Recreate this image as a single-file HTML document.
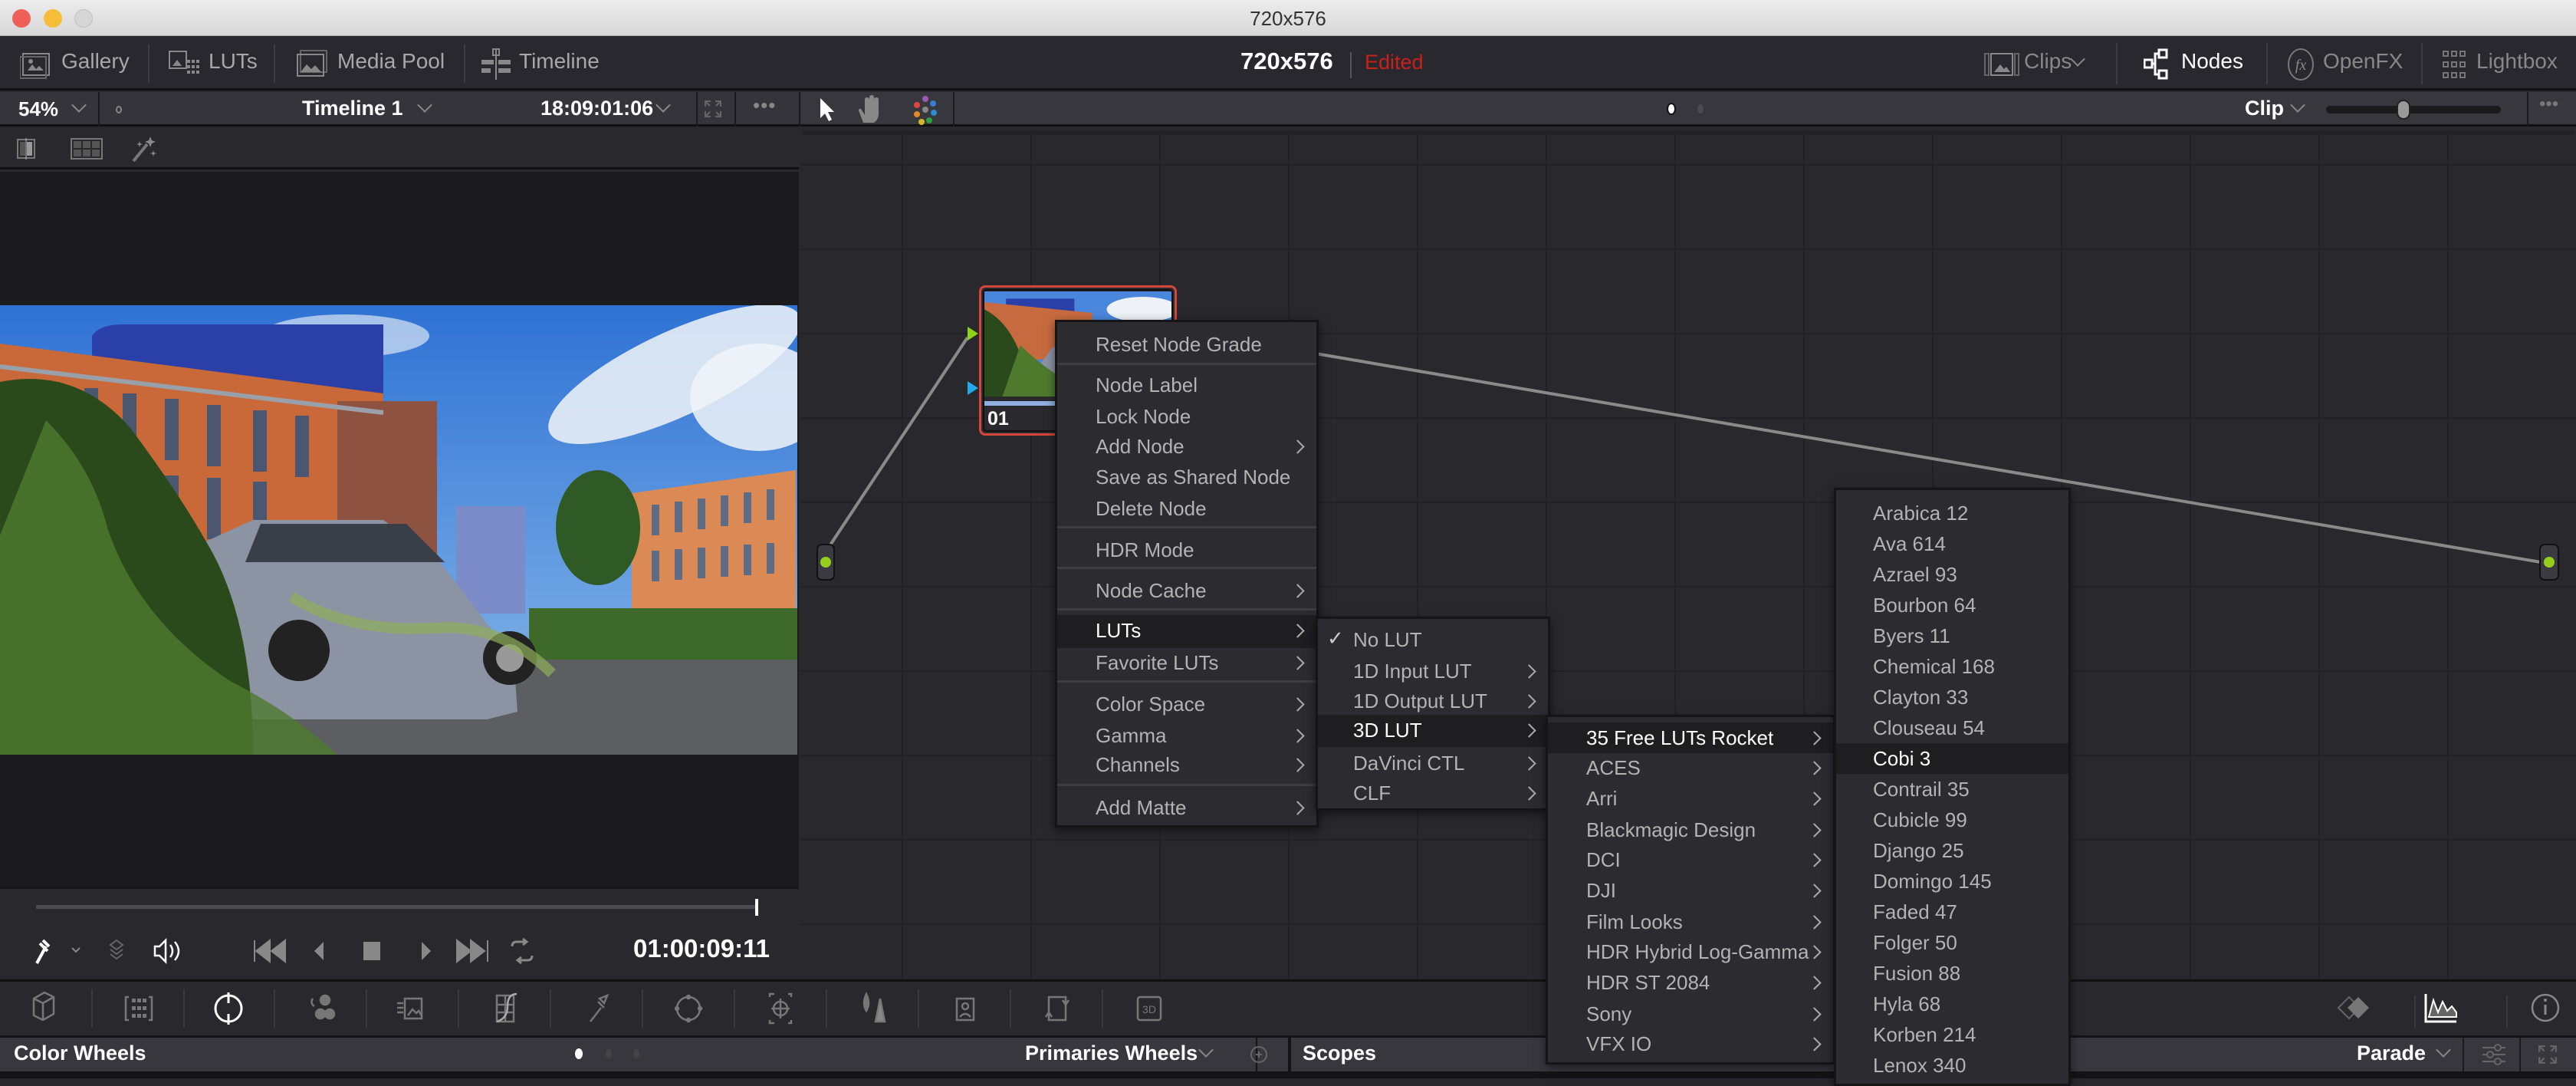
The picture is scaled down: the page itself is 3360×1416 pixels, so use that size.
<!DOCTYPE html>
<html><head><meta charset="utf-8">
<style>
*{margin:0;padding:0;box-sizing:border-box}
body{width:3360px;height:1406px;overflow:hidden;background:#28282d;font-family:"Liberation Sans",sans-serif;position:relative;color:#aaa}
.a{position:absolute}
.t{position:absolute;white-space:nowrap}
.sep{position:absolute;width:2px;background:#3c3c42}
.menu{position:absolute;background:#2b2b30;border:3px solid #151517;box-shadow:0 4px 12px rgba(0,0,0,.5)}
.mi{position:absolute;left:0;right:0;height:40px;line-height:40px;font-size:26px;color:#b3b3b3;white-space:nowrap}
.mi.h{background:#1e1e21;color:#fff}
.ms{position:absolute;left:0;right:0;height:3px;background:#3d3d42}
.ar{position:absolute;right:16px;top:0;font-size:26px;color:#aaa}
.ar:before{content:"";position:absolute;right:2px;top:14px;width:11px;height:11px;border-right:2px solid #aaa;border-top:2px solid #aaa;transform:rotate(45deg)}
.chev{position:absolute;width:14px;height:14px;border-right:2px solid #888;border-bottom:2px solid #888;transform:rotate(45deg)}
</style></head><body>

<!-- title bar -->
<div class="a" style="left:0;top:0;width:3360px;height:47px;background:linear-gradient(#ececec,#d8d8d8);border-bottom:1px solid #b0b0b0"></div>
<div class="a" style="left:16px;top:12px;width:24px;height:24px;border-radius:50%;background:#ee5f57"></div>
<div class="a" style="left:57px;top:12px;width:24px;height:24px;border-radius:50%;background:#f6be38"></div>
<div class="a" style="left:97px;top:12px;width:24px;height:24px;border-radius:50%;background:#d6d6d6;border:1px solid #c0c0c0"></div>
<div class="t" style="left:0;width:3360px;top:9px;text-align:center;font-size:26px;color:#333">720x576</div>

<!-- top toolbar -->
<div class="a" style="left:0;top:47px;width:3360px;height:71px;background:#28282e;border-bottom:3px solid #111"></div>
<svg class="a" style="left:26px;top:62px" width="46" height="42" viewBox="0 0 46 42"><rect x="4" y="8" width="34" height="28" fill="none" stroke="#888" stroke-width="2"/><rect x="0" y="12" width="34" height="28" fill="none" stroke="#666" stroke-width="2"/><path d="M10 30l6-8 5 6 4-4 6 6z" fill="#888"/><circle cx="14" cy="18" r="3" fill="#888"/></svg>
<div class="t" style="left:80px;top:64px;font-size:28px;color:#a8a8a8">Gallery</div>
<div class="sep" style="left:193px;top:58px;height:50px"></div>
<svg class="a" style="left:220px;top:66px" width="42" height="34" viewBox="0 0 42 34"><rect x="1" y="1" width="22" height="22" fill="none" stroke="#888" stroke-width="2"/><path d="M5 20l6-8 6 8z" fill="#888"/><g fill="#888"><rect x="24" y="12" width="4" height="4"/><rect x="30" y="12" width="4" height="4"/><rect x="36" y="12" width="4" height="4"/><rect x="24" y="19" width="4" height="4"/><rect x="30" y="19" width="4" height="4"/><rect x="36" y="19" width="4" height="4"/><rect x="24" y="26" width="4" height="4"/><rect x="30" y="26" width="4" height="4"/><rect x="36" y="26" width="4" height="4"/></g></svg>
<div class="t" style="left:272px;top:64px;font-size:28px;color:#a8a8a8">LUTs</div>
<div class="sep" style="left:357px;top:58px;height:50px"></div>
<svg class="a" style="left:386px;top:64px" width="42" height="38" viewBox="0 0 42 38"><rect x="6" y="2" width="34" height="28" fill="none" stroke="#666" stroke-width="2"/><rect x="2" y="7" width="34" height="28" fill="none" stroke="#888" stroke-width="2"/><path d="M6 30l8-10 6 6 5-5 8 9z" fill="#888"/></svg>
<div class="t" style="left:440px;top:64px;font-size:28px;color:#a8a8a8">Media Pool</div>
<div class="sep" style="left:605px;top:58px;height:50px"></div>
<svg class="a" style="left:626px;top:62px" width="42" height="44" viewBox="0 0 42 44"><path d="M21 2v40" stroke="#888" stroke-width="2"/><rect x="17" y="2" width="8" height="8" fill="none" stroke="#888" stroke-width="2"/><rect x="2" y="16" width="16" height="6" fill="#888"/><rect x="24" y="16" width="16" height="6" fill="#888"/><rect x="2" y="27" width="12" height="6" fill="#888"/><rect x="24" y="27" width="16" height="6" fill="#888"/></svg>
<div class="t" style="left:677px;top:64px;font-size:28px;color:#a8a8a8">Timeline</div>

<div class="t" style="left:1618px;top:62px;font-size:31px;font-weight:bold;color:#fff">720x576</div>
<div class="sep" style="left:1761px;top:68px;height:34px;background:#555"></div>
<div class="t" style="left:1780px;top:66px;font-size:27px;color:#c8201a">Edited</div>

<svg class="a" style="left:2588px;top:68px" width="46" height="32" viewBox="0 0 46 32"><rect x="1" y="2" width="5" height="28" fill="none" stroke="#666" stroke-width="2"/><rect x="40" y="2" width="5" height="28" fill="none" stroke="#666" stroke-width="2"/><rect x="9" y="2" width="28" height="28" fill="none" stroke="#888" stroke-width="2"/><path d="M13 26l8-10 5 6 3-3 5 7z" fill="#888"/></svg>
<div class="t" style="left:2640px;top:64px;font-size:28px;color:#888">Clips</div>
<div class="chev" style="left:2703px;top:70px"></div>
<div class="sep" style="left:2760px;top:56px;height:54px"></div>
<svg class="a" style="left:2796px;top:62px" width="36" height="44" viewBox="0 0 36 44"><rect x="1" y="16" width="10" height="10" fill="none" stroke="#fff" stroke-width="3"/><rect x="20" y="3" width="10" height="10" fill="none" stroke="#fff" stroke-width="3"/><rect x="20" y="30" width="10" height="10" fill="none" stroke="#fff" stroke-width="3"/><path d="M11 21h4v-13h5M15 21v14h5" fill="none" stroke="#fff" stroke-width="3"/></svg>
<div class="t" style="left:2845px;top:64px;font-size:28px;color:#fff">Nodes</div>
<div class="sep" style="left:2956px;top:56px;height:54px"></div>
<svg class="a" style="left:2982px;top:62px" width="38" height="44" viewBox="0 0 38 44"><ellipse cx="19" cy="22" rx="16" ry="20" fill="none" stroke="#777" stroke-width="2"/><text x="19" y="29" font-size="20" font-style="italic" fill="#888" text-anchor="middle" font-family="Liberation Serif">fx</text></svg>
<div class="t" style="left:3030px;top:64px;font-size:28px;color:#888">OpenFX</div>
<div class="sep" style="left:3158px;top:56px;height:54px"></div>
<svg class="a" style="left:3186px;top:66px" width="30" height="36" viewBox="0 0 30 36"><g fill="none" stroke="#777" stroke-width="2"><rect x="1" y="1" width="6" height="6"/><rect x="12" y="1" width="6" height="6"/><rect x="23" y="1" width="6" height="6"/><rect x="1" y="15" width="6" height="6"/><rect x="12" y="15" width="6" height="6"/><rect x="23" y="15" width="6" height="6"/><rect x="1" y="29" width="6" height="6"/><rect x="12" y="29" width="6" height="6"/><rect x="23" y="29" width="6" height="6"/></g></svg>
<div class="t" style="left:3230px;top:64px;font-size:28px;color:#888">Lightbox</div>

<!-- viewer header -->
<div class="a" style="left:0;top:120px;width:1044px;height:45px;background:#34343a;border-bottom:3px solid #111"></div>
<div class="t" style="left:24px;top:127px;font-size:26px;font-weight:bold;color:#fff">54%</div>
<div class="chev" style="left:96px;top:130px"></div>
<div class="sep" style="left:128px;top:120px;height:45px;background:#1a1a1c"></div>
<div class="a" style="left:151px;top:138px;width:8px;height:10px;border:2px solid #888;border-radius:50%"></div>
<div class="t" style="left:394px;top:126px;font-size:27px;font-weight:bold;color:#fff">Timeline 1</div>
<div class="chev" style="left:547px;top:130px"></div>
<div class="t" style="left:705px;top:126px;font-size:27px;font-weight:bold;color:#fff">18:09:01:06</div>
<div class="chev" style="left:858px;top:130px"></div>
<div class="sep" style="left:908px;top:120px;height:45px;background:#1a1a1c"></div>
<svg class="a" style="left:918px;top:130px" width="24" height="24" viewBox="0 0 24 24"><path d="M2 9V2h7M15 2h7v7M22 15v7h-7M9 22H2v-7M2 2l6 6M22 2l-6 6M22 22l-6-6M2 22l6-6" fill="none" stroke="#666" stroke-width="2"/></svg>
<div class="sep" style="left:958px;top:120px;height:45px;background:#1a1a1c"></div>
<div class="t" style="left:982px;top:122px;font-size:26px;color:#888;letter-spacing:1px">•••</div>
<div class="sep" style="left:1042px;top:120px;height:45px;background:#1a1a1c"></div>

<!-- left icon row -->
<div class="a" style="left:0;top:165px;width:1042px;height:56px;background:#28282d;border-bottom:3px solid #111"></div>
<svg class="a" style="left:22px;top:180px" width="24" height="28" viewBox="0 0 24 28"><rect x="1" y="2" width="22" height="24" fill="none" stroke="#777" stroke-width="2"/><rect x="4" y="5" width="7" height="18" fill="#555"/><rect x="13" y="5" width="7" height="18" fill="#999"/><path d="M12 0v28" stroke="#bbb" stroke-width="1"/></svg>
<svg class="a" style="left:92px;top:180px" width="42" height="28" viewBox="0 0 42 28"><rect x="1" y="1" width="40" height="26" fill="none" stroke="#777" stroke-width="2"/><g fill="#555"><rect x="4" y="4" width="10" height="9"/><rect x="16" y="4" width="10" height="9"/><rect x="28" y="4" width="10" height="9"/><rect x="4" y="15" width="10" height="9"/><rect x="16" y="15" width="10" height="9"/><rect x="28" y="15" width="10" height="9"/></g></svg>
<svg class="a" style="left:170px;top:176px" width="36" height="36" viewBox="0 0 36 36"><path d="M4 34L22 12" stroke="#777" stroke-width="4"/><path d="M26 2l2 5 5 2-5 2-2 5-2-5-5-2 5-2zM12 8l1 3 3 1-3 1-1 3-1-3-3-1 3-1zM30 20l1 3 3 1-3 1-1 3-1-3-3-1 3-1z" fill="#888"/></svg>

<!-- viewer -->
<div class="a" style="left:0;top:224px;width:1042px;height:933px;background:#1b1b1d"></div>
<svg class="a" style="left:0;top:398px" width="1040" height="586" viewBox="0 0 1040 586">
<defs><linearGradient id="sky" x1="0" y1="0" x2="0" y2="1"><stop offset="0" stop-color="#2f72d4"/><stop offset="1" stop-color="#8cbcea"/></linearGradient></defs>
<rect width="1040" height="586" fill="url(#sky)"/>
<ellipse cx="880" cy="90" rx="180" ry="55" fill="#e8eef6" opacity=".9" transform="rotate(-25 880 90)"/>
<ellipse cx="990" cy="120" rx="90" ry="70" fill="#f0f4f8" opacity=".85"/>
<ellipse cx="450" cy="40" rx="110" ry="28" fill="#dbe6f3" opacity=".7"/>
<path d="M120 40q10-15 40-15h340v100H120z" fill="#2b3fa8"/>
<path d="M0 50L500 115v230H0z" fill="#c9693a"/>
<path d="M440 125h130v230H440z" fill="#8d5340"/>
<g fill="#4b5670"><rect x="60" y="100" width="18" height="80"/><rect x="110" y="108" width="18" height="80"/><rect x="160" y="115" width="18" height="80"/><rect x="215" y="122" width="18" height="80"/><rect x="270" y="130" width="18" height="80"/><rect x="330" y="137" width="18" height="80"/><rect x="385" y="144" width="18" height="80"/><rect x="110" y="215" width="18" height="80"/><rect x="160" y="218" width="18" height="80"/><rect x="215" y="222" width="18" height="80"/><rect x="270" y="225" width="18" height="80"/><rect x="330" y="230" width="18" height="80"/></g>
<path d="M0 80L500 140" stroke="#9aa0aa" stroke-width="6"/>
<rect x="595" y="262" width="90" height="140" fill="#7b8cc8"/>
<path d="M824 245l214-30v180H824z" fill="#dc8a55"/>
<g fill="#5e6b85"><rect x="850" y="260" width="10" height="40"/><rect x="880" y="256" width="10" height="40"/><rect x="910" y="252" width="10" height="40"/><rect x="940" y="248" width="10" height="40"/><rect x="970" y="244" width="10" height="40"/><rect x="1000" y="240" width="10" height="40"/><rect x="850" y="320" width="10" height="40"/><rect x="880" y="318" width="10" height="40"/><rect x="910" y="316" width="10" height="40"/><rect x="940" y="314" width="10" height="40"/><rect x="970" y="312" width="10" height="40"/><rect x="1000" y="310" width="10" height="40"/></g>
<ellipse cx="780" cy="290" rx="55" ry="75" fill="#2f5a25"/>
<rect x="690" y="395" width="350" height="72" fill="#3d6a2a"/>
<rect x="0" y="462" width="1040" height="124" fill="#5c5e62"/>
<path d="M150 420q10-60 70-90l110-50h170l70 50 100 130 5 70-40 10H170z" fill="#8c93a3"/>
<path d="M340 285h190l50 50H320z" fill="#3a3e48"/>
<circle cx="665" cy="460" r="35" fill="#222"/><circle cx="665" cy="460" r="18" fill="#999"/>
<circle cx="390" cy="450" r="40" fill="#222"/>
<path d="M0 100q100-20 170 60q60 80 100 150q60 100 60 276H0z" fill="#2a4a1b"/>
<path d="M60 150q60 60 80 140q40 120 160 200q80 40 140 96H0V300z" fill="#4f7a2e" opacity=".8"/>
<path d="M380 380q80 50 200 40q80 0 140 60" stroke="#8fae5a" stroke-width="14" fill="none" opacity=".7"/>
</svg>

<!-- transport -->
<div class="a" style="left:0;top:1157px;width:1042px;height:120px;background:#28282d;border-top:2px solid #151517"></div>
<div class="a" style="left:47px;top:1180px;width:940px;height:5px;background:#4a4a50"></div>
<div class="a" style="left:985px;top:1172px;width:4px;height:22px;background:#fff"></div>
<svg class="a" style="left:40px;top:1220px" width="1000" height="40" viewBox="0 0 1000 40">
<path d="M8 36L20 14M12 10l10 10M16 6l8 8" stroke="#fff" stroke-width="4"/><path d="M54 16l5 5 5-5" stroke="#888" stroke-width="2" fill="none"/>
<path d="M112 6l8 6-8 6-8-6zM104 18l8 6 8-6M104 24l8 6 8-6" stroke="#666" stroke-width="2" fill="none"/>
<path d="M162 14h6l8-8v28l-8-8h-6zM182 12q6 8 0 16M188 8q10 12 0 24" stroke="#fff" stroke-width="2.5" fill="none"/>
<path d="M292 6v28M312 6l-18 14 18 14zM332 6l-18 14 18 14z" fill="#888" stroke="#888" stroke-width="2"/>
<path d="M382 8l-12 12 12 12z" fill="#888"/>
<rect x="434" y="8" width="22" height="24" fill="#888"/>
<path d="M510 8l12 12-12 12z" fill="#888"/>
<path d="M556 6l18 14-18 14zM574 6l18 14-18 14zM596 6v28" fill="#888" stroke="#888" stroke-width="2"/>
<path d="M628 14q0-6 6-6h12M642 4l5 4-5 4M654 26q0 6-6 6h-12M640 36l-5-4 5-4" stroke="#888" stroke-width="3" fill="none"/>
</svg>
<div class="t" style="left:826px;top:1218px;font-size:33px;font-weight:bold;color:#fff">01:00:09:11</div>

<!-- node area -->
<div class="a" style="left:1044px;top:120px;width:2316px;height:45px;background:#37373d;border-bottom:3px solid #111"></div>
<svg class="a" style="left:1066px;top:126px" width="24" height="34" viewBox="0 0 24 34"><path d="M4 2v26l6-6 5 10 4-2-5-10h8z" fill="#fff"/></svg>
<svg class="a" style="left:1118px;top:124px" width="30" height="38" viewBox="0 0 30 38"><path d="M8 36l-6-16q0-3 3-2l5 8V6q0-3 3-3t3 3v12V3q0-3 3-3t3 3v15V6q0-3 3-3t3 3v18q0 8-6 12z" fill="#888"/></svg>
<svg class="a" style="left:1190px;top:124px" width="34" height="40" viewBox="0 0 34 40"><circle cx="17" cy="5" r="4" fill="#9b59b6"/><circle cx="27" cy="11" r="4" fill="#3a7bd5"/><circle cx="28" cy="23" r="4" fill="#2a8ad4"/><circle cx="22" cy="33" r="4" fill="#2ea043"/><circle cx="12" cy="35" r="4" fill="#d4b82a"/><circle cx="6" cy="25" r="4" fill="#e08a2a"/><circle cx="6" cy="13" r="4" fill="#d44"/><circle cx="17" cy="19" r="4" fill="#888"/></svg>
<div class="sep" style="left:1243px;top:120px;height:45px;background:#1a1a1c"></div>
<div class="a" style="left:2174px;top:134px;width:12px;height:16px;border-radius:50%;background:#fff;border:2px solid #111"></div>
<div class="a" style="left:2214px;top:136px;width:8px;height:12px;border-radius:50%;background:#4a4a50"></div>
<div class="t" style="left:2928px;top:126px;font-size:27px;font-weight:bold;color:#fff">Clip</div>
<div class="chev" style="left:2990px;top:130px"></div>
<div class="a" style="left:3034px;top:138px;width:228px;height:10px;border-radius:5px;background:#1a1a1c"></div>
<div class="a" style="left:3126px;top:130px;width:18px;height:26px;border-radius:9px;background:#999;border:2px solid #222"></div>
<div class="sep" style="left:3296px;top:120px;height:45px;background:#1a1a1c"></div>
<div class="t" style="left:3312px;top:122px;font-size:24px;color:#777">•••</div>

<div class="a" style="left:1044px;top:168px;width:2316px;height:1109px;background:#28282d;
background-image:linear-gradient(90deg,#222226 2px,transparent 2px),linear-gradient(#222226 2px,transparent 2px);
background-size:168px 110px;background-position:-1044px -174px"></div>
<div class="a" style="left:1046px;top:170px;width:2312px;height:6px;background:#222226"></div>

<!-- connections -->
<svg class="a" style="left:1044px;top:168px" width="2316" height="1109" viewBox="1044 168 2316 1109">
<path d="M1078 718L1262 440" stroke="#8a8a8a" stroke-width="4"/>
<path d="M1534 430L3314 733" stroke="#8a8a8a" stroke-width="4"/>
<rect x="1066" y="710" width="22" height="46" rx="6" fill="#3a3a40" stroke="#111" stroke-width="2"/>
<circle cx="1077" cy="733" r="7" fill="#96d01c"/>
<rect x="3313" y="710" width="24" height="46" rx="6" fill="#3a3a40" stroke="#111" stroke-width="2"/>
<circle cx="3325" cy="733" r="7" fill="#96d01c"/>
<path d="M1262 426l14 9-14 9z" fill="#8fd21a"/>
<path d="M1262 497l14 9-14 9z" fill="#23a8e8"/>
</svg>

<!-- node -->
<div class="a" style="left:1277px;top:372px;width:258px;height:196px;border:3px solid #d2473a;border-radius:8px;background:#2a2a2e">
<div class="a" style="left:2px;top:2px;right:2px;bottom:2px;border:2px solid #111;border-radius:5px"></div>
</div>
<svg class="a" style="left:1284px;top:380px" width="244" height="137" viewBox="0 0 1040 586" preserveAspectRatio="none">
<rect width="1040" height="586" fill="#4a86dc"/><ellipse cx="880" cy="100" rx="200" ry="70" fill="#eef2f6"/>
<path d="M120 40h380v100H120z" fill="#2b3fa8"/><path d="M0 60L600 120v260H0z" fill="#c86a40"/>
<rect x="0" y="440" width="1040" height="146" fill="#5c5e62"/><path d="M300 420l80-110h260l80 120v80H300z" fill="#8c93a3"/>
<path d="M0 100q200 100 260 486H0z" fill="#2a4a1b"/><path d="M200 300q150 150 400 286H100z" fill="#4f7a2e"/>
</svg>
<div class="a" style="left:1284px;top:523px;width:120px;height:6px;background:#8fb0e0"></div>
<div class="t" style="left:1288px;top:532px;font-size:25px;font-weight:bold;color:#fff">01</div>

<!-- right-side bottom toolbar -->
<div class="a" style="left:1044px;top:1277px;width:2316px;height:73px;background:#28282d;border-top:3px solid #111"></div>

<!-- bottom left toolbar -->
<div class="a" style="left:0;top:1277px;width:1044px;height:73px;background:#28282d;border-top:3px solid #111"></div>
<svg class="a" style="left:0;top:1280px" width="1560" height="70" viewBox="0 0 1560 70">
<g stroke="#3a3a40" stroke-width="2"><path d="M120 10v50M240 10v50M358 10v50M478 10v50M598 10v50M718 10v50M838 10v50M958 10v50M1078 10v50M1198 10v50M1318 10v50M1438 10v50"/></g>
<g fill="none" stroke="#777" stroke-width="2.5">
<path d="M44 22l14-8 12 6v22l-14 8-12-6zM44 22l12 6 14-8M56 28v22"/>
<path d="M168 20h-4v30h4M194 20h4v30h-4"/><g fill="#777" stroke="none"><rect x="172" y="22" width="5" height="5"/><rect x="179" y="22" width="5" height="5"/><rect x="186" y="22" width="5" height="5"/><rect x="172" y="32" width="5" height="5"/><rect x="179" y="32" width="5" height="5"/><rect x="186" y="32" width="5" height="5"/><rect x="172" y="42" width="5" height="5"/><rect x="179" y="42" width="5" height="5"/><rect x="186" y="42" width="5" height="5"/></g>
<circle cx="298" cy="35" r="17" stroke="#fff" stroke-width="3"/><path d="M298 14v14M298 42v14" stroke="#fff" stroke-width="3"/>
<circle cx="424" cy="24" r="6" fill="#777"/><circle cx="418" cy="42" r="6" fill="#777"/><circle cx="430" cy="42" r="6" fill="#777"/><path d="M408 22q-4 6 2 10"/>
<rect x="528" y="22" width="22" height="26"/><path d="M518 28h8M518 34h8M518 40h8M532 44l6-8 5 5 3-3 4 6"/>
<path d="M648 18v34h22V18zM648 30h22M648 40h22M659 18v34"/><path d="M648 52q14-4 14-20t12-16" stroke="#aaa"/>
<path d="M770 52l14-18M780 26l8 8M782 22l10-4-4 10z"/>
<circle cx="898" cy="35" r="15"/><circle cx="898" cy="20" r="2" fill="#777"/><circle cx="898" cy="50" r="2" fill="#777"/><circle cx="883" cy="35" r="2" fill="#777"/><circle cx="913" cy="35" r="2" fill="#777"/>
<path d="M1004 20v-4h6M1028 16h4v4M1032 50v4h-4M1010 54h-6v-4"/><circle cx="1018" cy="35" r="9"/><path d="M1018 22v26M1006 35h24"/>
<path d="M1130 38q-6-10 0-22q6 12 0 22z" fill="#777"/><path d="M1142 52l6-30 6 30z" fill="#888"/>
<rect x="1248" y="22" width="22" height="28"/><circle cx="1259" cy="32" r="4"/><path d="M1252 46q7-8 14 0"/>
<rect x="1368" y="20" width="22" height="30"/><path d="M1364 46l4-6 4 6M1394 24l-4 6-4-6"/>
<rect x="1484" y="20" width="30" height="30" rx="3"/><text x="1499" y="41" font-size="14" fill="#777" stroke="none" text-anchor="middle" font-family="Liberation Sans">3D</text>
</g></svg>
<svg class="a" style="left:3030px;top:1288px" width="320" height="52" viewBox="0 0 320 52">
<path d="M20 26l14-14 14 14-14 14z" fill="none" stroke="#666" stroke-width="2"/><path d="M32 26l14-14 14 14-14 14z" fill="#777"/>
<path d="M120 10v52" stroke="#3a3a40" stroke-width="2"/>
<path d="M134 8v36h40" stroke="#fff" stroke-width="3" fill="none"/><path d="M138 38l6-22 6 16 6-14 6 12 6-6 6 8v6H138z" fill="#666" stroke="#fff" stroke-width="2"/>
<path d="M240 10v52" stroke="#3a3a40" stroke-width="2"/>
<circle cx="290" cy="26" r="17" fill="none" stroke="#888" stroke-width="2.5"/><path d="M290 22v13" stroke="#888" stroke-width="3"/><circle cx="290" cy="16" r="2" fill="#888"/>
</svg>

<!-- bottom headers -->
<div class="a" style="left:0;top:1350px;width:3360px;height:56px;background:#141416"></div>
<div class="a" style="left:0;top:1353px;width:1638px;height:44px;background:#37373d"></div>
<div class="t" style="left:18px;top:1358px;font-size:27px;font-weight:bold;color:#fff">Color Wheels</div>
<div class="a" style="left:750px;top:1367px;width:10px;height:14px;border-radius:50%;background:#fff"></div>
<div class="a" style="left:790px;top:1368px;width:8px;height:12px;border-radius:50%;background:#444"></div>
<div class="a" style="left:826px;top:1368px;width:8px;height:12px;border-radius:50%;background:#444"></div>
<div class="t" style="left:1337px;top:1358px;font-size:27px;font-weight:bold;color:#fff">Primaries Wheels</div>
<div class="chev" style="left:1566px;top:1362px"></div>
<div class="a" style="left:1640px;top:1353px;width:40px;height:44px;background:#37373d"></div>
<svg class="a" style="left:1628px;top:1360px" width="28" height="30" viewBox="0 0 28 30"><circle cx="14" cy="15" r="10" fill="none" stroke="#666" stroke-width="2"/><path d="M14 11v8M10 15h8" stroke="#666" stroke-width="2"/></svg>
<div class="a" style="left:1684px;top:1353px;width:1676px;height:44px;background:#37373d"></div>
<div class="t" style="left:1699px;top:1358px;font-size:27px;font-weight:bold;color:#fff">Scopes</div>
<div class="t" style="left:3074px;top:1358px;font-size:27px;font-weight:bold;color:#fff">Parade</div>
<div class="chev" style="left:3180px;top:1362px"></div>
<div class="sep" style="left:3212px;top:1353px;height:44px;background:#1a1a1c"></div>
<svg class="a" style="left:3236px;top:1360px" width="34" height="30" viewBox="0 0 34 30"><path d="M2 6h30M2 15h30M2 24h30" stroke="#666" stroke-width="2"/><circle cx="22" cy="6" r="4" fill="#37373d" stroke="#666" stroke-width="2"/><circle cx="12" cy="15" r="4" fill="#37373d" stroke="#666" stroke-width="2"/><circle cx="22" cy="24" r="4" fill="#37373d" stroke="#666" stroke-width="2"/></svg>
<div class="sep" style="left:3286px;top:1353px;height:44px;background:#1a1a1c"></div>
<svg class="a" style="left:3310px;top:1362px" width="26" height="26" viewBox="0 0 24 24"><path d="M2 9V2h7M15 2h7v7M22 15v7h-7M9 22H2v-7M2 2l6 6M22 2l-6 6M22 22l-6-6M2 22l6-6" fill="none" stroke="#666" stroke-width="2"/></svg>

<!-- menu 1 -->
<div class="menu" style="left:1376px;top:417px;width:344px;height:662px">
<div class="mi" style="top:9px;padding-left:50px">Reset Node Grade</div>
<div class="ms" style="top:53px"></div>
<div class="mi" style="top:62px;padding-left:50px">Node Label</div>
<div class="mi" style="top:103px;padding-left:50px">Lock Node</div>
<div class="mi" style="top:142px;padding-left:50px">Add Node<span class="ar"></span></div>
<div class="mi" style="top:182px;padding-left:50px">Save as Shared Node</div>
<div class="mi" style="top:223px;padding-left:50px">Delete Node</div>
<div class="ms" style="top:266px"></div>
<div class="mi" style="top:277px;padding-left:50px">HDR Mode</div>
<div class="ms" style="top:319px"></div>
<div class="mi" style="top:330px;padding-left:50px">Node Cache<span class="ar"></span></div>
<div class="ms" style="top:373px"></div>
<div class="mi h" style="top:382px;padding-left:50px;height:43px">LUTs<span class="ar"></span></div>
<div class="mi" style="top:424px;padding-left:50px">Favorite LUTs<span class="ar"></span></div>
<div class="ms" style="top:467px"></div>
<div class="mi" style="top:478px;padding-left:50px">Color Space<span class="ar"></span></div>
<div class="mi" style="top:519px;padding-left:50px">Gamma<span class="ar"></span></div>
<div class="mi" style="top:557px;padding-left:50px">Channels<span class="ar"></span></div>
<div class="ms" style="top:602px"></div>
<div class="mi" style="top:613px;padding-left:50px">Add Matte<span class="ar"></span></div>
</div>

<!-- menu 2 -->
<div class="menu" style="left:1716px;top:804px;width:306px;height:253px">
<div class="mi" style="top:7px;padding-left:46px">No LUT</div>
<div class="t" style="left:12px;top:10px;font-size:26px;color:#ccc">✓</div>
<div class="mi" style="top:48px;padding-left:46px">1D Input LUT<span class="ar"></span></div>
<div class="mi" style="top:87px;padding-left:46px">1D Output LUT<span class="ar"></span></div>
<div class="mi h" style="top:125px;padding-left:46px;height:42px">3D LUT<span class="ar"></span></div>
<div class="mi" style="top:168px;padding-left:46px">DaVinci CTL<span class="ar"></span></div>
<div class="mi" style="top:207px;padding-left:46px">CLF<span class="ar"></span></div>
</div>

<!-- menu 3 -->
<div class="menu" style="left:2016px;top:932px;width:378px;height:456px">
<div class="mi h" style="top:7px;padding-left:50px;height:40px">35 Free LUTs Rocket<span class="ar"></span></div>
<div class="mi" style="top:46px;padding-left:50px">ACES<span class="ar"></span></div>
<div class="mi" style="top:86px;padding-left:50px">Arri<span class="ar"></span></div>
<div class="mi" style="top:127px;padding-left:50px">Blackmagic Design<span class="ar"></span></div>
<div class="mi" style="top:166px;padding-left:50px">DCI<span class="ar"></span></div>
<div class="mi" style="top:206px;padding-left:50px">DJI<span class="ar"></span></div>
<div class="mi" style="top:247px;padding-left:50px">Film Looks<span class="ar"></span></div>
<div class="mi" style="top:286px;padding-left:50px">HDR Hybrid Log-Gamma<span class="ar"></span></div>
<div class="mi" style="top:326px;padding-left:50px">HDR ST 2084<span class="ar"></span></div>
<div class="mi" style="top:367px;padding-left:50px">Sony<span class="ar"></span></div>
<div class="mi" style="top:406px;padding-left:50px">VFX IO<span class="ar"></span></div>
</div>

<!-- menu 4 -->
<div class="menu" style="left:2392px;top:636px;width:309px;height:780px">
<div class="mi" style="top:10px;padding-left:48px">Arabica 12</div>
<div class="mi" style="top:50px;padding-left:48px">Ava 614</div>
<div class="mi" style="top:90px;padding-left:48px">Azrael 93</div>
<div class="mi" style="top:130px;padding-left:48px">Bourbon 64</div>
<div class="mi" style="top:170px;padding-left:48px">Byers 11</div>
<div class="mi" style="top:210px;padding-left:48px">Chemical 168</div>
<div class="mi" style="top:250px;padding-left:48px">Clayton 33</div>
<div class="mi" style="top:290px;padding-left:48px">Clouseau 54</div>
<div class="mi h" style="top:330px;padding-left:48px">Cobi 3</div>
<div class="mi" style="top:370px;padding-left:48px">Contrail 35</div>
<div class="mi" style="top:410px;padding-left:48px">Cubicle 99</div>
<div class="mi" style="top:450px;padding-left:48px">Django 25</div>
<div class="mi" style="top:490px;padding-left:48px">Domingo 145</div>
<div class="mi" style="top:530px;padding-left:48px">Faded 47</div>
<div class="mi" style="top:570px;padding-left:48px">Folger 50</div>
<div class="mi" style="top:610px;padding-left:48px">Fusion 88</div>
<div class="mi" style="top:650px;padding-left:48px">Hyla 68</div>
<div class="mi" style="top:690px;padding-left:48px">Korben 214</div>
<div class="mi" style="top:730px;padding-left:48px">Lenox 340</div>
</div>

</body></html>
